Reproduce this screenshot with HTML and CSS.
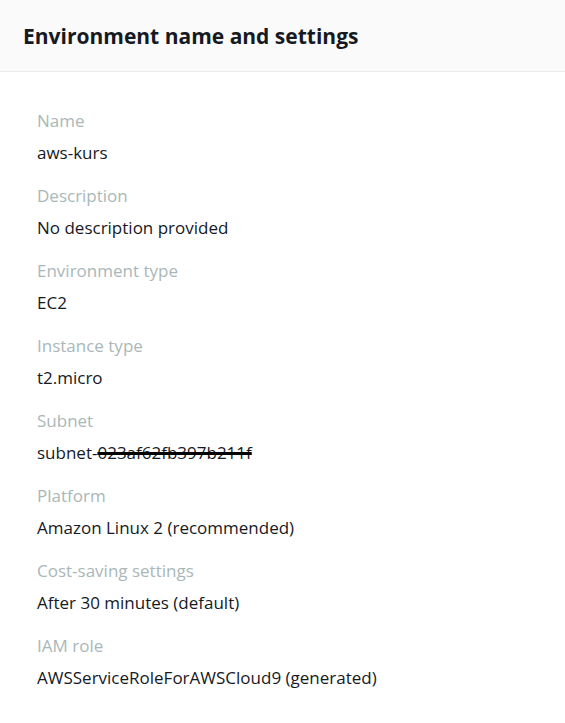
FILE: index.html
```html
<!DOCTYPE html>
<html>
<head>
<meta charset="utf-8">
<link rel="stylesheet" href="styles.css">
</head>
<body>
<div class="panel">
  <div class="panel-header">
    <h2 class="panel-title">Environment name and settings</h2>
  </div>
  <div class="panel-body">
    <div class="field"><div class="label">Name</div><div class="value">aws-kurs</div></div>
    <div class="field"><div class="label">Description</div><div class="value">No description provided</div></div>
    <div class="field"><div class="label">Environment type</div><div class="value">EC2</div></div>
    <div class="field"><div class="label">Instance type</div><div class="value">t2.micro</div></div>
    <div class="field"><div class="label">Subnet</div><div class="value">subnet-<span class="redacted">023af62fb397b211f</span></div></div>
    <div class="field"><div class="label">Platform</div><div class="value">Amazon Linux 2 (recommended)</div></div>
    <div class="field"><div class="label">Cost-saving settings</div><div class="value">After 30 minutes (default)</div></div>
    <div class="field"><div class="label">IAM role</div><div class="value">AWSServiceRoleForAWSCloud9 (generated)</div></div>
  </div>
</div>
</body>
</html>
```
FILE: styles.css
```css
html, body {
  margin: 0;
  padding: 0;
  background: #ffffff;
}
body {
  font-family: "Open Sans", "Liberation Sans", sans-serif;
  color: #16191f;
}
.panel-header {
  background: #fafafa;
  border-bottom: 1px solid #eaeded;
  height: 71px;
  display: flex;
  align-items: center;
  padding-left: 23px;
}
.panel-title {
  margin: 0;
  font-size: 21px;
  font-weight: 700;
  line-height: 28px;
  color: #16191f;
}
.panel-body {
  padding: 38px 37px 0;
}
.field {
  margin-bottom: 21px;
}
.label {
  font-size: 17px;
  line-height: 22px;
  color: #aab7b8;
  margin-bottom: 10px;
}
.value {
  font-size: 17px;
  line-height: 22px;
  color: #16191f;
}
.redacted {
  text-decoration: line-through;
  text-decoration-thickness: 3px;
  text-decoration-color: #000;
}
```
